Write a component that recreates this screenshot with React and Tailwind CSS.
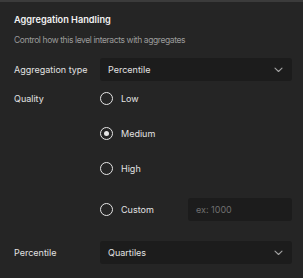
import React from "react";

function Chevron() {
  return (
    <svg width="9" height="6" viewBox="0 0 9 6" fill="none" className="shrink-0">
      <path d="M1 1.2L4.5 4.5L8 1.2" stroke="#a3a3a3" strokeWidth="1.1" strokeLinecap="round" strokeLinejoin="round" />
    </svg>
  );
}

function Select({ value }) {
  return (
    <div className="flex h-[23px] w-[192px] shrink-0 items-center justify-between rounded-[3px] bg-[#1c1c1c] pl-[8px] pr-[9px]">
      <span className="text-[#e2e2e2]">{value}</span>
      <Chevron />
    </div>
  );
}

function Radio({ checked, label }) {
  return (
    <div className="flex items-center gap-[8px]">
      <div className="flex h-[13px] w-[13px] items-center justify-center rounded-full border-[1.5px] border-[#e6e6e6]">
        {checked && <div className="h-[5px] w-[5px] rounded-full bg-[#e6e6e6]" />}
      </div>
      <span className="text-[#e2e2e2]">{label}</span>
    </div>
  );
}

export default function App() {
  return (
    <div
      className="h-[278px] w-[303px] border-t-2 border-[#3b3b3b] bg-[#252525] pl-[14px] pr-[11px] pt-[12px] text-[9px] leading-[12px] text-[#e2e2e2]"
      style={{ fontFamily: "Inter, 'Noto Sans', sans-serif" }}
    >
      <div className="text-[9.2px] font-semibold text-[#f2f2f2]">Aggregation Handling</div>
      <div className="mt-[8px] text-[8.5px] tracking-[-0.4px] text-[#9b9b9b]">Control how this level interacts with aggregates</div>

      <div className="mt-[12px] flex items-center">
        <div className="w-[86px] shrink-0">Aggregation type</div>
        <Select value="Percentile" />
      </div>

      <div className="mt-[11px] flex">
        <div className="w-[86px] shrink-0 pt-[1px]">Quality</div>
        <div className="flex flex-1 flex-col">
          <div className="h-[14px]"><Radio label="Low" /></div>
          <div className="mt-[21px] h-[14px]"><Radio checked label="Medium" /></div>
          <div className="mt-[21px] h-[14px]"><Radio label="High" /></div>
          <div className="mt-[22px] flex h-[23px] items-center justify-between">
            <Radio label="Custom" />
            <div className="flex h-[23px] w-[104px] items-center rounded-[3px] bg-[#1c1c1c] pl-[8px] text-[#6f6f6f]">
              ex: 1000
            </div>
          </div>
        </div>
      </div>

      <div className="mt-[20px] flex items-center">
        <div className="w-[86px] shrink-0">Percentile</div>
        <Select value="Quartiles" />
      </div>
    </div>
  );
}
